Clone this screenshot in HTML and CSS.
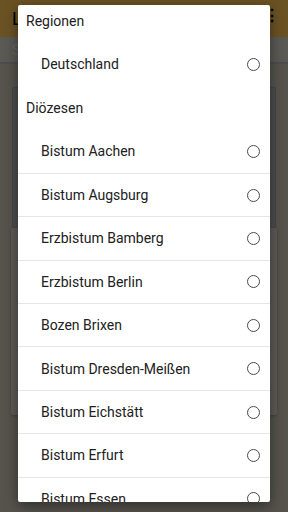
FILE: index.html
```html
<!DOCTYPE html>
<html lang="de">
<head>
    <meta charset="UTF-8">
    <meta name="viewport" content="width=device-width, initial-scale=1.0">
    <title>Regionen</title>
    <link rel="stylesheet" href="styles.css">
</head>
<body>
    <div class="app">
        <header class="app-bar">
            <span class="app-title">Liturgie</span>
            <span class="app-menu">&#8942;</span>
        </header>
        <div class="search-strip">Suche</div>
        <div class="card card-top"></div>
        <div class="card card-main"></div>
    </div>

    <div class="scrim"></div>

    <div class="dialog">
        <div class="dialog-list">
            <div class="row header">Regionen</div>
            <div class="row item">
                <span>Deutschland</span>
                <span class="radio"></span>
            </div>
            <div class="row header">Diözesen</div>
            <div class="diocese-list">
                <div class="row item"><span>Bistum Aachen</span><span class="radio"></span></div>
                <div class="row item"><span>Bistum Augsburg</span><span class="radio"></span></div>
                <div class="row item"><span>Erzbistum Bamberg</span><span class="radio"></span></div>
                <div class="row item"><span>Erzbistum Berlin</span><span class="radio"></span></div>
                <div class="row item"><span>Bozen Brixen</span><span class="radio"></span></div>
                <div class="row item"><span>Bistum Dresden-Meißen</span><span class="radio"></span></div>
                <div class="row item"><span>Bistum Eichstätt</span><span class="radio"></span></div>
                <div class="row item"><span>Bistum Erfurt</span><span class="radio"></span></div>
                <div class="row item"><span>Bistum Essen</span><span class="radio"></span></div>
            </div>
        </div>
    </div>
</body>
</html>
```

FILE: styles.css
```css
* {
    margin: 0;
    padding: 0;
    box-sizing: border-box;
}

body {
    font-family: Roboto, 'Noto Sans', sans-serif;
    width: 288px;
    height: 512px;
    overflow: hidden;
    background: #bdb8a9;
}

.app {
    height: 512px;
    background: #bdb8a9;
}

.app-bar {
    height: 37px;
    background: #eeb650;
    display: flex;
    align-items: center;
    justify-content: space-between;
    padding: 0 8px 0 12px;
    color: #000;
}

.app-title {
    font-size: 18px;
}

.app-menu {
    font-size: 16px;
    font-weight: bold;
    margin-top: -6px;
}

.search-strip {
    height: 27px;
    background: #c8c6bb;
    border-bottom: 2px solid #a8aab0;
    padding: 5px 12px;
    font-size: 14px;
    color: #e0e0e0;
}

.card {
    margin: 0 12px 0 12px;
    border-radius: 2px;
}

.card-top {
    margin-top: 23px;
    height: 142px;
    background: #a9abab;
    border: 1px solid #9a9c9e;
}

.card-main {
    margin: -1px 11px 0 11px;
    height: 187px;
    background: #cccac4;
    box-shadow: 0 1px 3px rgba(0, 0, 0, 0.25);
}

.scrim {
    position: absolute;
    inset: 0;
    background: rgba(0, 0, 0, 0.55);
}

.dialog {
    position: absolute;
    left: 18px;
    top: 5px;
    width: 252px;
    height: 497px;
    background: #fff;
    border-radius: 2px;
    overflow: hidden;
    box-shadow: 0 4px 14px rgba(0, 0, 0, 0.45);
}

.dialog-list {
    margin-top: -5.7px;
}

.row {
    height: 43.4px;
    display: flex;
    align-items: center;
    font-size: 14px;
    color: #212121;
}

.header {
    padding-left: 8px;
}

.item {
    padding: 0 8px 0 23px;
    justify-content: space-between;
}

.diocese-list .item + .item {
    border-top: 1px solid #e6e6e6;
}

.radio {
    width: 13px;
    height: 13px;
    border: 1.4px solid #4a4a4a;
    border-radius: 50%;
    margin-right: 2px;
}
```
